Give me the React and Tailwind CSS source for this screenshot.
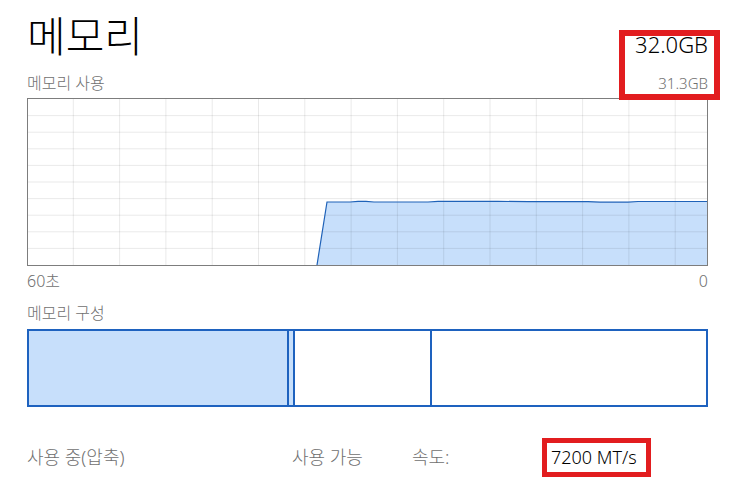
import React from 'react'

const FONT = { fontFamily: '"Noto Sans", "Noto Sans CJK KR", sans-serif' }

const vLines = Array.from({ length: 14 }, (_, i) => 45.3 + i * 46.3)
const hLines = Array.from({ length: 9 }, (_, i) => (i + 1) * 16.6)

const linePts = [
  [289, 166], [299, 103], [322, 103], [330, 102.3], [338, 102.3], [346, 103],
  [400, 103], [410, 102.4], [470, 102.4], [500, 102.6], [560, 102.6], [572, 103.2],
  [600, 103.2], [610, 102.5], [650, 102.5], [679, 102.5],
]

const UsageChart = () => {
  const line = linePts.map((p, i) => (i ? 'L' : 'M') + p[0] + ' ' + p[1]).join(' ')
  const area = line + ' L679 166 Z'
  return (
    <svg width="679" height="166" viewBox="0 0 679 166" className="block">
      <path d={area} fill="#c7dffb" />
      {vLines.map((x) => (
        <line key={'v' + x} x1={x} y1="0" x2={x} y2="166" stroke="rgba(0,0,0,0.085)" strokeWidth="1" />
      ))}
      {hLines.map((y) => (
        <line key={'h' + y} x1="0" y1={y} x2="679" y2={y} stroke="rgba(0,0,0,0.085)" strokeWidth="1" />
      ))}
      <path d={line} fill="none" stroke="#1f62b8" strokeWidth="1.2" />
    </svg>
  )
}

const App = () => {
  return (
    <div className="relative w-[730px] h-[477px] overflow-hidden bg-white pl-[27px] pr-[22px] font-light" style={FONT}>
      <div className="flex justify-between h-[68px]">
        <div className="pt-[15px] text-[42px] leading-none text-black">메모리</div>
        <div className="pt-[33px] text-[22px] leading-none text-black">32.0GB</div>
      </div>

      <div className="flex justify-between items-center h-[30px] text-[#707070]">
        <div className="text-[16px] leading-none">메모리 사용</div>
        <div className="text-[15px] leading-none">31.3GB</div>
      </div>

      <div className="h-[168px] border border-[#7d7d7d]">
        <UsageChart />
      </div>

      <div className="flex justify-between items-center h-[30px] text-[16px] leading-none text-[#707070]">
        <span>60초</span>
        <span>0</span>
      </div>

      <div className="flex items-center h-[33px] text-[16px] leading-none text-[#707070]">메모리 구성</div>

      <div className="flex h-[78px] border-2 border-[#1e62bf]">
        <div className="w-[258px] bg-[#c7dffb]"></div>
        <div className="w-[6px] border-l-2 border-[#1e62bf] bg-[#c7dffb]"></div>
        <div className="w-[137px] border-l-2 border-[#1e62bf]"></div>
        <div className="flex-1 border-l-2 border-[#1e62bf]"></div>
      </div>

      <div className="flex items-center h-[40px] mt-[30px] text-[18px] leading-none text-[#707070]">
        <span className="w-[265px]">사용 중(압축)</span>
        <span className="w-[120px]">사용 가능</span>
        <span className="w-[139px]">속도:</span>
        <span className="text-black">7200 MT/s</span>
      </div>

      <div className="absolute left-[619px] top-[30px] w-[101px] h-[70px] border-[6px] border-[#e21d1f]"></div>
      <div className="absolute left-[542px] top-[438px] w-[109px] h-[39px] border-[5px] border-[#e21d1f]"></div>
    </div>
  )
}

export default App
